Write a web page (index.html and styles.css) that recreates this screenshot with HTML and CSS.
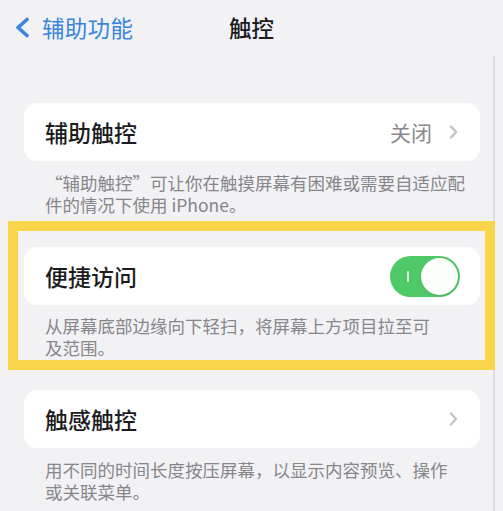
FILE: index.html
```html
<!DOCTYPE html>
<html lang="zh-CN">
<head>
<meta charset="utf-8">
<title>触控</title>
<link rel="stylesheet" href="styles.css">
</head>
<body>
<header class="nav">
  <div class="back">
    <svg class="back-icon" width="17" height="21" viewBox="0 0 17 21"><path d="M13 2.5 L4 10.5 L13 18.5" fill="none" stroke="#3a84df" stroke-width="3.6" stroke-linecap="round" stroke-linejoin="round"/></svg>
    <span>辅助功能</span>
  </div>
  <div class="title">触控</div>
  <div></div>
</header>
<main class="main">
  <section class="group">
    <div class="card">
      <span class="label">辅助触控</span>
      <span class="value">关闭</span>
      <svg class="chev" width="9" height="14" viewBox="0 0 9 14"><path d="M2 1.5 L7 7 L2 12.5" fill="none" stroke="#c5c5c9" stroke-width="2.4" stroke-linecap="round" stroke-linejoin="round"/></svg>
    </div>
    <p class="foot">“辅助触控”可让你在触摸屏幕有困难或需要自适应配<br>件的情况下使用 iPhone。</p>
  </section>
  <section class="highlight">
    <div class="card">
      <span class="label">便捷访问</span>
      <span class="toggle"><span class="mark"></span><span class="knob"></span></span>
    </div>
    <p class="foot">从屏幕底部边缘向下轻扫，将屏幕上方项目拉至可<br>及范围。</p>
  </section>
  <section class="group last">
    <div class="card">
      <span class="label">触感触控</span>
      <svg class="chev" width="9" height="14" viewBox="0 0 9 14"><path d="M2 1.5 L7 7 L2 12.5" fill="none" stroke="#c5c5c9" stroke-width="2.4" stroke-linecap="round" stroke-linejoin="round"/></svg>
    </div>
    <p class="foot">用不同的时间长度按压屏幕，以显示内容预览、操作<br>或关联菜单。</p>
  </section>
</main>
</body>
</html>
```
FILE: styles.css
```css
* { box-sizing: border-box; }
html, body {
  margin: 0;
  padding: 0;
}
body {
  width: 503px;
  height: 511px;
  overflow: hidden;
  background: #f2f2f5;
  font-family: "Noto Sans CJK SC", "Noto Sans", sans-serif;
  color: #1c1c1e;
}
.nav {
  display: grid;
  grid-template-columns: 1fr auto 1fr;
  align-items: center;
  height: 56px;
  padding-bottom: 2px;
}
.back {
  display: flex;
  align-items: center;
  padding-left: 14px;
  color: #3a84df;
  font-size: 22.5px;
  gap: 11px;
}
.back span { letter-spacing: 0.3px; }
.title {
  font-size: 22.5px;
  font-weight: 500;
  color: #1c1c1e;
}
.main {
  width: 495px;
  height: 455px;
  border-right: 2px solid #dcdce0;
  padding-top: 47px;
}
.group {
  padding: 0 13px 0 24px;
}
.card {
  display: flex;
  align-items: center;
  height: 58px;
  background: #fff;
  border-radius: 13px;
  padding: 0 22px 0 21px;
}
.label {
  flex: 1;
  font-size: 23px;
  font-weight: 500;
  color: #1c1c1e;
}
.value {
  font-size: 21px;
  color: #8a8a8e;
  margin-right: 17px;
}
.chev { display: block; }
.foot {
  margin: 11px 0 0 21px;
  font-size: 17.5px;
  line-height: 21.5px;
  color: #86868b;
  white-space: nowrap;
}
.highlight {
  margin: 6px -2px 0 8px;
  border: 10px solid #f9d54b;
  padding: 16px 5px 2px 6px;
}
.highlight .card {
  padding-right: 20px;
}
.highlight .foot { margin-top: 10px; }
.last { margin-top: 20px; }
.last .foot { margin-top: 11px; }
.toggle {
  position: relative;
  display: block;
  width: 70px;
  height: 41px;
  border-radius: 21px;
  background: #4fc867;
}
.mark {
  position: absolute;
  left: 17px;
  top: 15px;
  width: 2px;
  height: 11px;
  background: rgba(255,255,255,0.8);
  border-radius: 1px;
}
.knob {
  position: absolute;
  right: 2px;
  top: 2px;
  width: 37px;
  height: 37px;
  border-radius: 50%;
  background: #fdfffd;
  box-shadow: 0 1px 2px rgba(0,0,0,0.12);
}
```
